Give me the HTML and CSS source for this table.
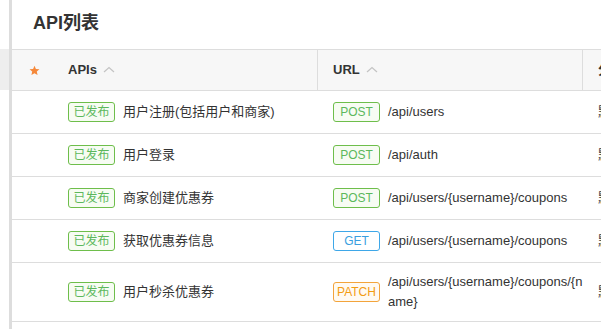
FILE: index.html
```html
<!DOCTYPE html>
<html lang="zh-CN">
<head>
  <meta charset="UTF-8">
  <title>API列表</title>
  <link rel="stylesheet" href="styles.css">
</head>
<body>

<div class="page">
  <div class="side"><div class="side-head"></div></div>
  <div class="panel">
    <h1 class="title">API列表</h1>

    <div class="table">
      <div class="row head">
        <div class="cell c-star">
          <svg class="star" width="11" height="11" viewBox="0 0 24 24"><path d="M12 1.5l3.1 7.1 7.7.7-5.8 5.1 1.7 7.6L12 18l-6.7 4 1.7-7.6-5.8-5.1 7.7-.7z" fill="#f5883a"/></svg>
        </div>
        <div class="cell c-name sep">APIs <svg class="sort" width="12" height="7" viewBox="0 0 12 7"><polyline points="1,6 6,1.5 11,6" fill="none" stroke="#c4c4c4" stroke-width="1.2"/></svg></div>
        <div class="cell c-url sep">URL <svg class="sort" width="12" height="7" viewBox="0 0 12 7"><polyline points="1,6 6,1.5 11,6" fill="none" stroke="#c4c4c4" stroke-width="1.2"/></svg></div>
        <div class="cell c-group">分组</div>
      </div>

      <div class="row">
        <div class="cell c-star"></div>
        <div class="cell c-name"><span class="tag done">已发布</span>用户注册(包括用户和商家)</div>
        <div class="cell c-url"><span class="method post">POST</span><span class="path">/api/users</span></div>
        <div class="cell c-group">默认</div>
      </div>
      <div class="row">
        <div class="cell c-star"></div>
        <div class="cell c-name"><span class="tag done">已发布</span>用户登录</div>
        <div class="cell c-url"><span class="method post">POST</span><span class="path">/api/auth</span></div>
        <div class="cell c-group">默认</div>
      </div>
      <div class="row">
        <div class="cell c-star"></div>
        <div class="cell c-name"><span class="tag done">已发布</span>商家创建优惠券</div>
        <div class="cell c-url"><span class="method post">POST</span><span class="path">/api/users/{username}/coupons</span></div>
        <div class="cell c-group">默认</div>
      </div>
      <div class="row">
        <div class="cell c-star"></div>
        <div class="cell c-name"><span class="tag done">已发布</span>获取优惠券信息</div>
        <div class="cell c-url"><span class="method get">GET</span><span class="path">/api/users/{username}/coupons</span></div>
        <div class="cell c-group">默认</div>
      </div>
      <div class="row">
        <div class="cell c-star"></div>
        <div class="cell c-name"><span class="tag done">已发布</span>用户秒杀优惠券</div>
        <div class="cell c-url"><span class="method patch">PATCH</span><span class="path">/api/users/{username}/coupons/{name}</span></div>
        <div class="cell c-group">默认</div>
      </div>
    </div>
  </div>
</div>

</body>
</html>
```

FILE: styles.css
```css
* { margin: 0; padding: 0; box-sizing: border-box; }
body { background: #fff; color: #333; font-family: "Liberation Sans", "Noto Sans CJK SC", Arial, sans-serif; font-size: 13px; overflow: hidden; }
.page { display: flex; width: 601px; height: 329px; overflow: hidden; }
.side { width: 9px; flex: none; }
.side-head { margin-top: 49px; height: 41px; background: #eee; }
.panel { flex: none; width: 760px; border-left: 3px solid #ddd; }
.title { height: 49px; padding-left: 21px; font-size: 18px; font-weight: bold; line-height: 47px; color: #333; }

.table { border-top: 1px solid #ddd; }
.row { display: flex; border-bottom: 1px solid #ddd; min-height: 43px; }
.row.head { background: #f7f7f7; min-height: 41px; font-weight: bold; }
.cell { display: flex; align-items: center; padding: 9px 0; line-height: 20px; }
.head .cell { padding: 0; }
.sep { border-right: 1px solid #ddd; }
.c-star { width: 44px; justify-content: center; padding-left: 0; }
.head .c-star { padding-top: 1px; }
.star { margin-left: 1px; }
.c-name { width: 262px; padding-left: 12px; }
.head .c-name { padding-left: 12px; }
.c-url { width: 265px; padding-left: 15px; }
.head .c-url { padding-left: 15px; }
.c-group { flex: 1; padding-left: 15px; }
.head .c-group { padding-left: 15px; }
.sort { margin-left: 6px; margin-top: -2px; }

.tag, .method { display: inline-block; flex: none; width: 47px; height: 20px; line-height: 18px; margin-right: 8px; border: 1px solid; border-radius: 3px; text-align: center; font-size: 12px; }
.tag.done { color: #5cb85c; border-color: #6ebe4b; background: #f7fcf3; }
.method.post { color: #5cb85c; border-color: #6ebe4b; background: #f7fcf3; }
.method.get { color: #3a9fe0; border-color: #3ea7e8; background: #fff; }
.method.patch { color: #f39c12; border-color: #f3a43b; background: #fffaf2; }
.path { flex: 1; word-break: break-all; }
```
